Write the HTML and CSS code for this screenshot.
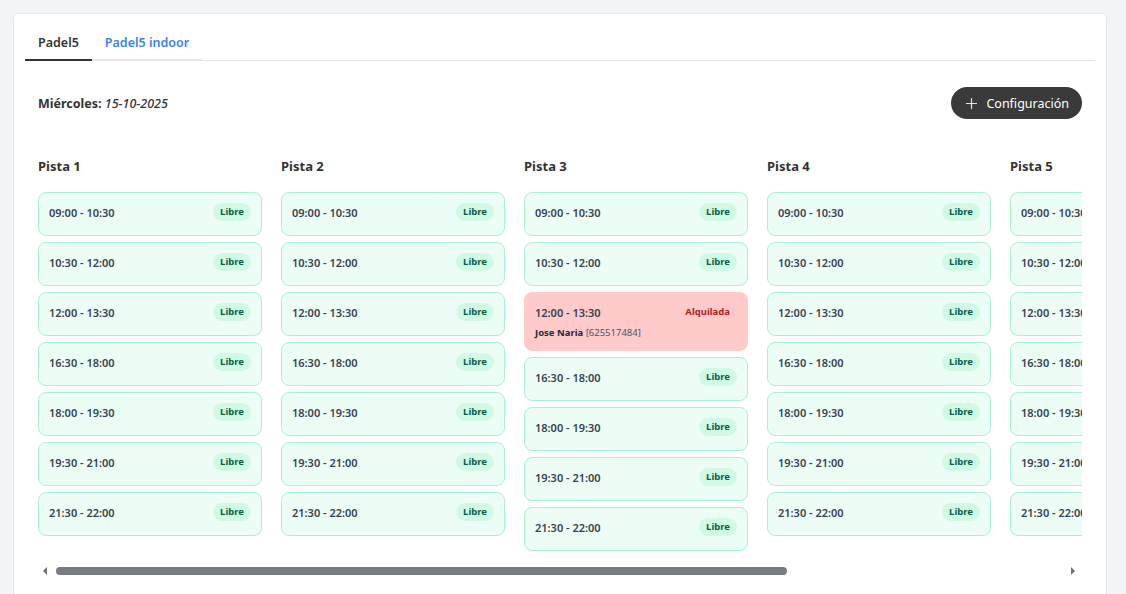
FILE: index.html
```html
<!DOCTYPE html>
<html lang="es">
<head>
<meta charset="utf-8">
<title>Reservas</title>
<link rel="stylesheet" href="styles.css">
</head>
<body>
<div class="card">
  <div class="tabs">
    <div class="tab active">Padel5</div>
    <div class="tab">Padel5 indoor</div>
  </div>
  <div class="content">
    <div class="toolbar">
      <div class="date"><strong>Miércoles:</strong> <em>15-10-2025</em></div>
      <button class="btn"><svg width="11" height="11" viewBox="0 0 11 11"><path d="M5.5 0v11M0 5.5h11" stroke="currentColor" stroke-width="1.2" fill="none"/></svg><span>Configuración</span></button>
    </div>
    <div class="scroller">
      <div class="court">
        <div class="court-title">Pista 1</div>
        <div class="slot"><div class="row"><span class="time">09:00 - 10:30</span><span class="badge">Libre</span></div></div>
        <div class="slot"><div class="row"><span class="time">10:30 - 12:00</span><span class="badge">Libre</span></div></div>
        <div class="slot"><div class="row"><span class="time">12:00 - 13:30</span><span class="badge">Libre</span></div></div>
        <div class="slot"><div class="row"><span class="time">16:30 - 18:00</span><span class="badge">Libre</span></div></div>
        <div class="slot"><div class="row"><span class="time">18:00 - 19:30</span><span class="badge">Libre</span></div></div>
        <div class="slot"><div class="row"><span class="time">19:30 - 21:00</span><span class="badge">Libre</span></div></div>
        <div class="slot"><div class="row"><span class="time">21:30 - 22:00</span><span class="badge">Libre</span></div></div>
      </div>
      <div class="court">
        <div class="court-title">Pista 2</div>
        <div class="slot"><div class="row"><span class="time">09:00 - 10:30</span><span class="badge">Libre</span></div></div>
        <div class="slot"><div class="row"><span class="time">10:30 - 12:00</span><span class="badge">Libre</span></div></div>
        <div class="slot"><div class="row"><span class="time">12:00 - 13:30</span><span class="badge">Libre</span></div></div>
        <div class="slot"><div class="row"><span class="time">16:30 - 18:00</span><span class="badge">Libre</span></div></div>
        <div class="slot"><div class="row"><span class="time">18:00 - 19:30</span><span class="badge">Libre</span></div></div>
        <div class="slot"><div class="row"><span class="time">19:30 - 21:00</span><span class="badge">Libre</span></div></div>
        <div class="slot"><div class="row"><span class="time">21:30 - 22:00</span><span class="badge">Libre</span></div></div>
      </div>
      <div class="court">
        <div class="court-title">Pista 3</div>
        <div class="slot"><div class="row"><span class="time">09:00 - 10:30</span><span class="badge">Libre</span></div></div>
        <div class="slot"><div class="row"><span class="time">10:30 - 12:00</span><span class="badge">Libre</span></div></div>
        <div class="slot rented"><div class="row"><span class="time">12:00 - 13:30</span><span class="badge badge-rented">Alquilada</span></div><div class="client"><strong>Jose Naria</strong> [625517484]</div></div>
        <div class="slot"><div class="row"><span class="time">16:30 - 18:00</span><span class="badge">Libre</span></div></div>
        <div class="slot"><div class="row"><span class="time">18:00 - 19:30</span><span class="badge">Libre</span></div></div>
        <div class="slot"><div class="row"><span class="time">19:30 - 21:00</span><span class="badge">Libre</span></div></div>
        <div class="slot"><div class="row"><span class="time">21:30 - 22:00</span><span class="badge">Libre</span></div></div>
      </div>
      <div class="court">
        <div class="court-title">Pista 4</div>
        <div class="slot"><div class="row"><span class="time">09:00 - 10:30</span><span class="badge">Libre</span></div></div>
        <div class="slot"><div class="row"><span class="time">10:30 - 12:00</span><span class="badge">Libre</span></div></div>
        <div class="slot"><div class="row"><span class="time">12:00 - 13:30</span><span class="badge">Libre</span></div></div>
        <div class="slot"><div class="row"><span class="time">16:30 - 18:00</span><span class="badge">Libre</span></div></div>
        <div class="slot"><div class="row"><span class="time">18:00 - 19:30</span><span class="badge">Libre</span></div></div>
        <div class="slot"><div class="row"><span class="time">19:30 - 21:00</span><span class="badge">Libre</span></div></div>
        <div class="slot"><div class="row"><span class="time">21:30 - 22:00</span><span class="badge">Libre</span></div></div>
      </div>
      <div class="court">
        <div class="court-title">Pista 5</div>
        <div class="slot"><div class="row"><span class="time">09:00 - 10:30</span><span class="badge">Libre</span></div></div>
        <div class="slot"><div class="row"><span class="time">10:30 - 12:00</span><span class="badge">Libre</span></div></div>
        <div class="slot"><div class="row"><span class="time">12:00 - 13:30</span><span class="badge">Libre</span></div></div>
        <div class="slot"><div class="row"><span class="time">16:30 - 18:00</span><span class="badge">Libre</span></div></div>
        <div class="slot"><div class="row"><span class="time">18:00 - 19:30</span><span class="badge">Libre</span></div></div>
        <div class="slot"><div class="row"><span class="time">19:30 - 21:00</span><span class="badge">Libre</span></div></div>
        <div class="slot"><div class="row"><span class="time">21:30 - 22:00</span><span class="badge">Libre</span></div></div>
      </div>
      <div class="court">
        <div class="court-title">Pista 6</div>
        <div class="slot"><div class="row"><span class="time">09:00 - 10:30</span><span class="badge">Libre</span></div></div>
        <div class="slot"><div class="row"><span class="time">10:30 - 12:00</span><span class="badge">Libre</span></div></div>
        <div class="slot"><div class="row"><span class="time">12:00 - 13:30</span><span class="badge">Libre</span></div></div>
        <div class="slot"><div class="row"><span class="time">16:30 - 18:00</span><span class="badge">Libre</span></div></div>
        <div class="slot"><div class="row"><span class="time">18:00 - 19:30</span><span class="badge">Libre</span></div></div>
        <div class="slot"><div class="row"><span class="time">19:30 - 21:00</span><span class="badge">Libre</span></div></div>
        <div class="slot"><div class="row"><span class="time">21:30 - 22:00</span><span class="badge">Libre</span></div></div>
      </div>
    </div>
    <div class="hscroll" aria-hidden="true">
      <span class="arrow arrow-left"></span>
      <div class="track"><div class="thumb" style="width: 72.6%"></div></div>
      <span class="arrow arrow-right"></span>
    </div>
  </div>
</div>
</body>
</html>
```
FILE: styles.css
```css
* { box-sizing: border-box; }
html, body { margin: 0; padding: 0; }
body {
  background: #f3f4f6;
  font-family: "Noto Sans", "Open Sans", sans-serif;
  color: #374151;
  padding: 13px 19px 0 13px;
  height: 594px;
  overflow: hidden;
}
.card {
  background: #fff;
  border: 1px solid #e5e7eb;
  border-radius: 5px;
  padding: 16px 11px 40px 11px;
  min-height: 640px;
}
.tabs {
  display: flex;
  border-bottom: 1px solid #e5e7eb;
}
.tab {
  font-size: 12.5px;
  line-height: 16px;
  font-weight: 600;
  padding: 5px 13px 8px;
  color: #3b82f6;
  border-bottom: 2px solid #e5e7eb;
  margin-bottom: -1px;
}
.tab.active {
  color: #333;
  border-bottom-color: #333;
}
.content {
  padding: 0 13px;
}
.toolbar {
  display: flex;
  align-items: center;
  justify-content: space-between;
  margin-top: 26px;
  height: 32px;
}
.date {
  font-size: 12.5px;
  color: #333;
}
.date strong { font-weight: 700; }
.date em { font-weight: 500; }
.btn {
  display: flex;
  align-items: center;
  gap: 9px;
  height: 32px;
  padding: 0 13px 0 15px;
  border: 0;
  border-radius: 16px;
  background: #3a3a3a;
  color: #fff;
  font-family: inherit;
  font-size: 12.5px;
}
.btn svg { color: #e5e5e5; }
.scroller {
  display: flex;
  gap: 19px;
  margin-top: 39px;
  padding-bottom: 12px;
  overflow: hidden;
}
.court {
  flex: 0 0 224px;
  display: flex;
  flex-direction: column;
  gap: 6px;
}
.court-title {
  font-size: 13px;
  line-height: 16px;
  font-weight: 700;
  color: #333;
  margin-bottom: 12px;
}
.slot {
  background: #ecfdf5;
  border: 1px solid #a7f3d0;
  border-radius: 8px;
  padding: 10px 10px 14px 10px;
}
.row {
  display: flex;
  align-items: center;
  justify-content: space-between;
  height: 18px;
}
.time {
  font-size: 11px;
  font-weight: 600;
  color: #374151;
}
.badge {
  font-size: 9.5px;
  font-weight: 700;
  line-height: 18px;
  padding: 0 7px;
  border-radius: 9px;
  background: #d1fae5;
  color: #065f46;
}
.slot.rented {
  background: #fecaca;
  border-color: #fecaca;
  padding-bottom: 11px;
}
.badge-rented {
  background: transparent;
  color: #b91c1c;
}
.client {
  margin-top: 6px;
  font-size: 9.5px;
  line-height: 12px;
  color: #4b5563;
}
.client strong { color: #1f2937; font-weight: 700; }
.hscroll {
  display: flex;
  align-items: center;
  height: 15px;
  padding: 0 7px 0 5px;
}
.arrow {
  width: 0;
  height: 0;
  border-top: 4px solid transparent;
  border-bottom: 4px solid transparent;
}
.arrow-left { border-right: 4px solid #6b7178; margin-right: 5px; }
.arrow-right { border-left: 4px solid #6b7178; margin-left: 4px; }
.track {
  flex: 1;
  padding: 0 4px;
}
.thumb {
  height: 8px;
  border-radius: 4px;
  background: #777c83;
}
```
